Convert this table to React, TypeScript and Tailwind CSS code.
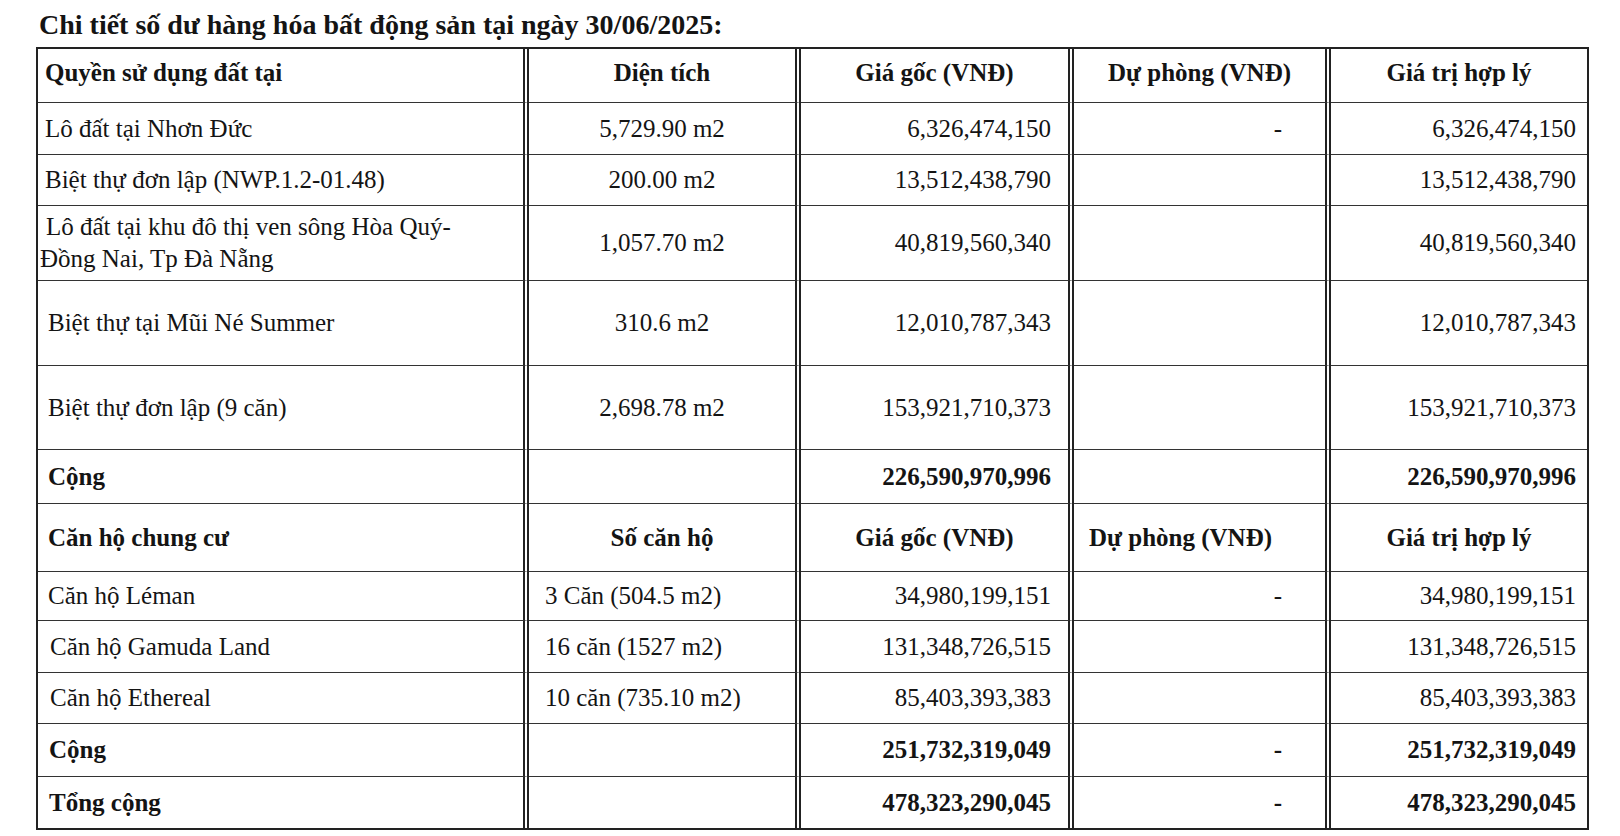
import type { ReactNode } from "react";

type Row = {
    kind: "head" | "item" | "total";
    label: ReactNode;
    second: string;
    cost: string;
    reserve: string;
    fair: string;
    // left padding of the first column, the scan is not perfectly even
    pad: string;
    // apartment rows have their count left-aligned instead of centred
    secondLeft?: boolean;
    reservePad?: string;
};

const rows: Row[] = [
    {
        kind: "head",
        label: "Quyền sử dụng đất tại",
        second: "Diện tích",
        cost: "Giá gốc (VNĐ)",
        reserve: "Dự phòng (VNĐ)",
        fair: "Giá trị hợp lý",
        pad: "pl-[7px]",
    },
    {
        kind: "item",
        label: "Lô đất tại Nhơn Đức",
        second: "5,729.90 m2",
        cost: "6,326,474,150",
        reserve: "-",
        fair: "6,326,474,150",
        pad: "pl-[7px]",
    },
    {
        kind: "item",
        label: "Biệt thự đơn lập (NWP.1.2-01.48)",
        second: "200.00 m2",
        cost: "13,512,438,790",
        reserve: "",
        fair: "13,512,438,790",
        pad: "pl-[7px]",
    },
    {
        kind: "item",
        label: (
            <span className="flex flex-col leading-[32px]">
                <span className="pl-[8px]">Lô đất tại khu đô thị ven sông Hòa Quý-</span>
                <span className="pl-[2px]">Đồng Nai, Tp Đà Nẵng</span>
            </span>
        ),
        second: "1,057.70 m2",
        cost: "40,819,560,340",
        reserve: "",
        fair: "40,819,560,340",
        pad: "pl-0",
    },
    {
        kind: "item",
        label: "Biệt thự tại Mũi Né Summer",
        second: "310.6 m2",
        cost: "12,010,787,343",
        reserve: "",
        fair: "12,010,787,343",
        pad: "pl-[10px]",
    },
    {
        kind: "item",
        label: "Biệt thự đơn lập (9 căn)",
        second: "2,698.78 m2",
        cost: "153,921,710,373",
        reserve: "",
        fair: "153,921,710,373",
        pad: "pl-[10px]",
    },
    {
        kind: "total",
        label: "Cộng",
        second: "",
        cost: "226,590,970,996",
        reserve: "",
        fair: "226,590,970,996",
        pad: "pl-[10px]",
    },
    {
        kind: "head",
        label: "Căn hộ chung cư",
        second: "Số căn hộ",
        cost: "Giá gốc (VNĐ)",
        reserve: "Dự phòng (VNĐ)",
        fair: "Giá trị hợp lý",
        pad: "pl-[10px]",
        reservePad: "pr-[38px]",
    },
    {
        kind: "item",
        label: "Căn hộ Léman",
        second: "3 Căn (504.5 m2)",
        cost: "34,980,199,151",
        reserve: "-",
        fair: "34,980,199,151",
        pad: "pl-[10px]",
        secondLeft: true,
    },
    {
        kind: "item",
        label: "Căn hộ Gamuda Land",
        second: "16 căn (1527 m2)",
        cost: "131,348,726,515",
        reserve: "",
        fair: "131,348,726,515",
        pad: "pl-[12px]",
        secondLeft: true,
    },
    {
        kind: "item",
        label: "Căn hộ Ethereal",
        second: "10 căn (735.10 m2)",
        cost: "85,403,393,383",
        reserve: "",
        fair: "85,403,393,383",
        pad: "pl-[12px]",
        secondLeft: true,
    },
    {
        kind: "total",
        label: "Cộng",
        second: "",
        cost: "251,732,319,049",
        reserve: "-",
        fair: "251,732,319,049",
        pad: "pl-[11px]",
    },
    {
        kind: "total",
        label: "Tổng cộng",
        second: "",
        cost: "478,323,290,045",
        reserve: "-",
        fair: "478,323,290,045",
        pad: "pl-[11px]",
    },
];

const divider = "border-r-[6px] border-double border-[#222]";

export default function App() {
    return (
        <div className="min-h-screen w-[1620px] bg-white font-['Liberation_Serif','Times_New_Roman',serif] text-[25px] text-[#141414]">
            <div className="pl-[39px] pt-[11px] text-[28px] font-bold leading-[28px]">
                Chi tiết số dư hàng hóa bất động sản tại ngày 30/06/2025:
            </div>

            <div className="ml-[36px] mt-[8px] grid w-[1553px] grid-cols-[491px_272px_273px_257px_256px] grid-rows-[54px_52px_51px_75px_85px_84px_54px_68px_49px_52px_51px_53px_51px] border-2 border-[#222]">
                {rows.map((row, i) => {
                    const last = i === rows.length - 1;
                    const line = last ? "" : "border-b border-b-[#333]";
                    const weight = row.kind === "item" ? "font-normal" : "font-bold";
                    const head = row.kind === "head";
                    const lift = head && i === 0 ? "pb-[6px]" : "";

                    return [
                        <div
                            key={`${i}-a`}
                            className={`flex items-center ${row.pad} ${weight} ${divider} ${line} ${lift}`}
                        >
                            {row.label}
                        </div>,
                        <div
                            key={`${i}-b`}
                            className={`flex items-center ${
                                row.secondLeft ? "justify-start pl-[16px]" : "justify-center"
                            } ${weight} ${divider} ${line} ${lift}`}
                        >
                            {row.second}
                        </div>,
                        <div
                            key={`${i}-c`}
                            className={`flex items-center ${
                                head ? "justify-center" : "justify-end pr-[17px]"
                            } ${weight} ${divider} ${line} ${lift}`}
                        >
                            {row.cost}
                        </div>,
                        <div
                            key={`${i}-d`}
                            className={`flex items-center ${
                                head
                                    ? `justify-center ${row.reservePad ?? ""}`
                                    : "justify-end pr-[43px]"
                            } ${weight} ${divider} ${line} ${lift}`}
                        >
                            {row.reserve}
                        </div>,
                        <div
                            key={`${i}-e`}
                            className={`flex items-center ${
                                head ? "justify-center" : "justify-end pr-[11px]"
                            } ${weight} ${line} ${lift}`}
                        >
                            {row.fair}
                        </div>,
                    ];
                })}
            </div>
        </div>
    );
}
